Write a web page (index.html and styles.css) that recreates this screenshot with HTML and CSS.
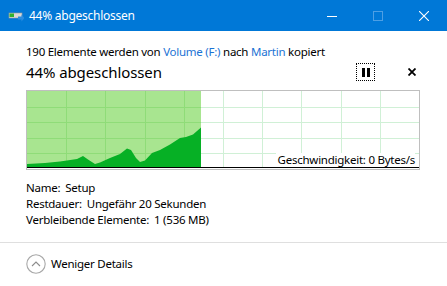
FILE: index.html
```html
<!doctype html>
<html lang="de">
  <head>
    <meta charset="UTF-8" />
    <meta name="viewport" content="width=device-width, initial-scale=1.0" />
    <title>44% abgeschlossen</title>
    <link rel="stylesheet" href="styles.css">
  </head>

  <body>
    <header class="titlebar">
      <svg class="app-icon" width="16" height="16" viewBox="0 0 16 16">
        <rect x="1" y="5" width="13" height="5" fill="#d9d9d9" />
        <rect x="1" y="5" width="13" height="5" fill="none" stroke="#9a9a9a" stroke-width="0.6" />
        <rect x="1.5" y="5.5" width="4.5" height="3.5" fill="#2fb12f" />
        <path d="M10 8.5h3.5v-2l3 3.5-3 3.5v-2H10z" fill="#2a8de0" />
      </svg>
      <span class="caption">44% abgeschlossen</span>
      <div class="controls">
        <span class="ctl">
          <svg width="10" height="10" viewBox="0 0 10 10"><path d="M0 5.5h10" stroke="#fff" /></svg>
        </span>
        <span class="ctl disabled">
          <svg width="10" height="10" viewBox="0 0 10 10"><rect x="0.5" y="0.5" width="9" height="9" fill="none" stroke="#4d9fe4" /></svg>
        </span>
        <span class="ctl">
          <svg width="10" height="10" viewBox="0 0 10 10"><path d="M0 0l10 10M10 0L0 10" stroke="#fff" stroke-width="1.1" /></svg>
        </span>
      </div>
    </header>

    <main class="dialog">
      <p class="summary">190 Elemente werden von <a href="#">Volume (F:)</a> nach <a href="#">Martin</a> kopiert</p>

      <div class="status">
        <span class="percent">44% abgeschlossen</span>
        <button class="pause" title="Anhalten">
          <svg width="8" height="9" viewBox="0 0 8 9"><path d="M0 0h3v9H0zM5 0h3v9H5z" fill="#000" /></svg>
        </button>
        <button class="cancel" title="Abbrechen">
          <svg width="8" height="8" viewBox="0 0 8 8"><path d="M0.5 0.5l7 7M7.5 0.5l-7 7" stroke="#000" stroke-width="1.8" /></svg>
        </button>
      </div>

      <div class="chart">
        <svg width="394" height="80" viewBox="0 0 394 80">
          <!-- bereits kopierter Bereich -->
          <rect x="1" y="1" width="174" height="76" fill="#a8e590" />
          <g stroke="#8fdc78" stroke-width="1">
            <path d="M40.5 1v76M79.5 1v76M119.5 1v76M158.5 1v76" />
            <path d="M1 17.5h174M1 32.5h174M1 48.5h174M1 63.5h174" />
          </g>
          <g stroke="#d0f0d6" stroke-width="1">
            <path d="M197.5 1v76M236.5 1v76M275.5 1v76M315.5 1v76M354.5 1v76" />
            <path d="M175 17.5h218M175 32.5h218M175 48.5h218M175 63.5h218" />
          </g>
          <!-- Geschwindigkeitsverlauf -->
          <path d="M1 74L19 73L34 71.5L51 69L57 66L62 69.5L69 74L74 72.5L84 68L94 64L101 58.5L105 60L110 68L114 72L119 70.5L126 63L134 60L144 54.5L154 48L160 47L167 44.5L171 41L175 37.5V77H1z" fill="#06b025" />
          <path d="M1 77.5h393" stroke="#000" />
          <rect x="0.5" y="0.5" width="393" height="79" fill="none" stroke="#bfbfbf" />
        </svg>
        <span class="speed">Geschwindigkeit: 0 Bytes/s</span>
      </div>

      <div class="details">
        <div class="row"><span class="label">Name:</span>Setup</div>
        <div class="row"><span class="label">Restdauer:</span>Ungefähr 20 Sekunden</div>
        <div class="row"><span class="label">Verbleibende Elemente:</span>1 (536 MB)</div>
      </div>
    </main>

    <footer class="more">
      <span class="toggle">
        <svg width="20" height="20" viewBox="0 0 20 20">
          <circle cx="10" cy="10" r="9.2" fill="none" stroke="#a8a8a8" stroke-width="1.1" />
          <path d="M6 12l4-4 4 4" fill="none" stroke="#8c8c8c" stroke-width="1.1" />
        </svg>
      </span>
      <span class="toggle-text">Weniger Details</span>
    </footer>
  </body>
</html>
```

FILE: styles.css
```css
* {
  margin: 0;
  padding: 0;
  box-sizing: border-box;
}
body {
  width: 447px;
  height: 286px;
  overflow: hidden;
  background-color: #fff;
  color: #000;
  font-family: "Noto Sans", "Open Sans", sans-serif;
  font-size: 11.5px;
  letter-spacing: -0.25px;
  line-height: 16px;
}
a {
  color: #1c73d4;
  text-decoration: none;
}
button {
  border: none;
  background: none;
  font: inherit;
}
.titlebar {
  display: flex;
  align-items: center;
  height: 31px;
  background-color: #0078d7;
  color: #fff;
}
.titlebar .app-icon {
  margin-left: 8px;
}
.titlebar .caption {
  margin-left: 5px;
  font-size: 12px;
}
.titlebar .controls {
  display: flex;
  margin-left: auto;
  height: 100%;
}
.titlebar .ctl {
  display: flex;
  align-items: center;
  justify-content: center;
  width: 46px;
  height: 100%;
}
.dialog {
  padding: 13px 27px 0 26px;
}
.summary {
  height: 16px;
}
.status {
  display: flex;
  align-items: center;
  height: 20px;
  margin-top: 2px;
}
.status .percent {
  font-size: 15px;
  line-height: 20px;
  letter-spacing: -0.1px;
}
.status .pause {
  display: flex;
  align-items: center;
  justify-content: center;
  width: 19px;
  height: 18px;
  margin-left: auto;
  border: 1px dotted #000;
}
.status .cancel {
  display: flex;
  align-items: center;
  justify-content: center;
  width: 16px;
  height: 18px;
  margin-left: 29px;
}
.chart {
  position: relative;
  height: 80px;
  margin-top: 8px;
}
.chart svg {
  display: block;
}
.chart .speed {
  position: absolute;
  right: 5px;
  bottom: 3px;
  padding-left: 2px;
  background-color: #fff;
  line-height: 14px;
}
.details {
  margin-top: 10px;
}
.details .label {
  margin-right: 5px;
}
.more {
  display: flex;
  align-items: center;
  margin-top: 14px;
  padding: 11px 26px 0;
  border-top: 1px solid #dfdfdf;
}
.more .toggle {
  display: flex;
  width: 20px;
  height: 20px;
}
.more .toggle-text {
  margin-left: 5px;
}
```
